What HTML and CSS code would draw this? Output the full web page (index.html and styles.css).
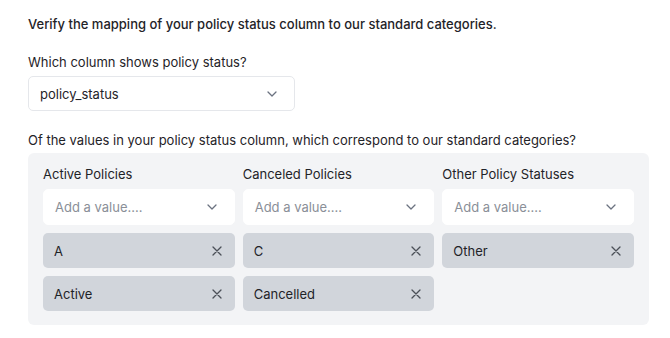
FILE: index.html
```html
<!DOCTYPE html>
<html lang="en">
<head>
  <meta charset="UTF-8" />
  <title>Policy status mapping</title>
  <link rel="stylesheet" href="styles.css">
</head>
<body>
<div class="page">
  <p class="intro">Verify the mapping of your policy status column to our standard categories.</p>

  <div class="field">
    <label class="label">Which column shows policy status?</label>
    <div class="select">
      <span>policy_status</span>
      <svg class="chev" viewBox="0 0 10 6" width="10" height="6"><path d="M1 1l4 4 4-4" /></svg>
    </div>
  </div>

  <p class="label question">Of the values in your policy status column, which correspond to our standard categories?</p>

  <div class="panel">
    <div class="col">
      <div class="col-title">Active Policies</div>
      <div class="select add">
        <span>Add a value....</span>
        <svg class="chev" viewBox="0 0 10 6" width="10" height="6"><path d="M1 1l4 4 4-4" /></svg>
      </div>
      <div class="chip"><span>A</span><svg class="x" viewBox="0 0 10 10" width="10" height="10"><path d="M1 1l8 8M9 1l-8 8" /></svg></div>
      <div class="chip"><span>Active</span><svg class="x" viewBox="0 0 10 10" width="10" height="10"><path d="M1 1l8 8M9 1l-8 8" /></svg></div>
    </div>
    <div class="col">
      <div class="col-title">Canceled Policies</div>
      <div class="select add">
        <span>Add a value....</span>
        <svg class="chev" viewBox="0 0 10 6" width="10" height="6"><path d="M1 1l4 4 4-4" /></svg>
      </div>
      <div class="chip"><span>C</span><svg class="x" viewBox="0 0 10 10" width="10" height="10"><path d="M1 1l8 8M9 1l-8 8" /></svg></div>
      <div class="chip"><span>Cancelled</span><svg class="x" viewBox="0 0 10 10" width="10" height="10"><path d="M1 1l8 8M9 1l-8 8" /></svg></div>
    </div>
    <div class="col">
      <div class="col-title">Other Policy Statuses</div>
      <div class="select add">
        <span>Add a value....</span>
        <svg class="chev" viewBox="0 0 10 6" width="10" height="6"><path d="M1 1l4 4 4-4" /></svg>
      </div>
      <div class="chip"><span>Other</span><svg class="x" viewBox="0 0 10 10" width="10" height="10"><path d="M1 1l8 8M9 1l-8 8" /></svg></div>
    </div>
  </div>
</div>
</body>
</html>
```

FILE: styles.css
```css
:root { --text:#1f2328; --muted:#8a8f98; --panel:#f3f4f6; --chip:#d1d5db; --line:#e5e7eb; }
*{box-sizing:border-box;margin:0;padding:0}
html,body{height:100%}
body{background:#fff;font-family:Inter,"Liberation Sans",Arial,sans-serif;font-size:13px;color:var(--text)}

.page{padding:14px 21px 0 28px;width:670px}

.intro{font-weight:500;line-height:20px}

.field{margin-top:18px}
.label{display:block;line-height:20px}

.select{
  display:flex;
  align-items:center;
  justify-content:space-between;
  background:#fff;
  border:1px solid var(--line);
  border-radius:5px;
  height:36px;
  padding:0 17px 0 11px;
}
.field .select{width:267px;height:35px;margin-top:4px}

.chev{fill:none;stroke:#6b7280;stroke-width:1.3;stroke-linecap:round;stroke-linejoin:round}

.question{margin-top:19px}

.panel{
  display:grid;
  grid-template-columns:repeat(3,1fr);
  gap:0 8px;
  background:var(--panel);
  border-radius:6px;
  padding:11px 15px 14px;
  margin-top:3px;
}
.col{display:flex;flex-direction:column;gap:8px}
.col-title{line-height:20px;margin-bottom:-3px}
.add{border-color:#fff}
.add span{color:var(--muted)}

.chip{
  display:flex;
  align-items:center;
  justify-content:space-between;
  background:var(--chip);
  border-radius:5px;
  height:35px;
  padding:0 13px 0 11px;
}
.x{fill:none;stroke:#4b5058;stroke-width:1.3;stroke-linecap:round}
```
